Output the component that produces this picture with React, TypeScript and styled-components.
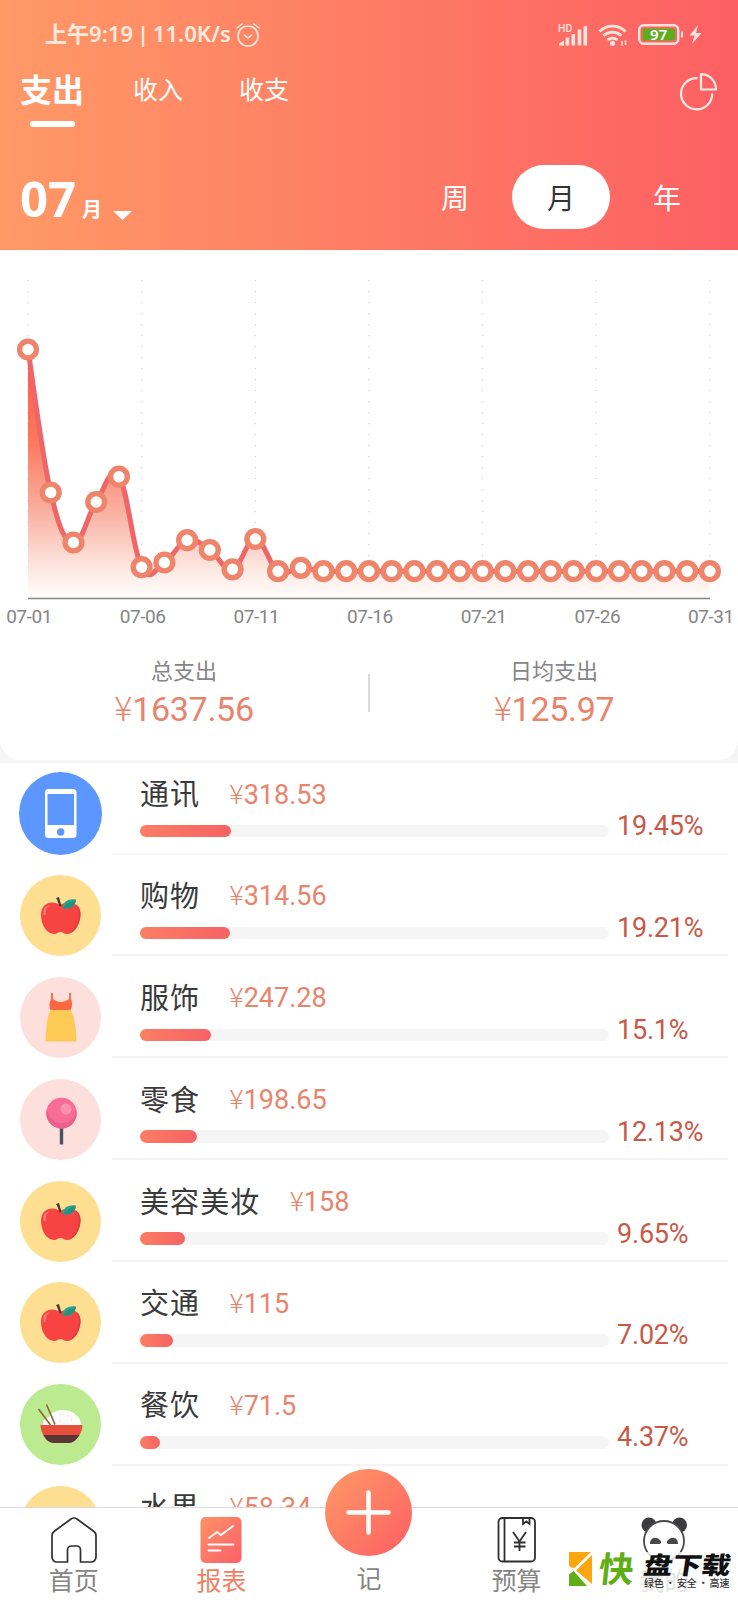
import React from 'react';
import styled, { createGlobalStyle } from 'styled-components';

const Global = createGlobalStyle`
  * { box-sizing: border-box; }
  body { margin: 0; background: #fff; }
`;

const cjk = `'Noto Sans CJK SC', sans-serif`;
const sunset = '#ff9966, #fd5f63';

const Screen = styled.div`
  position: relative;
  display: flex;
  flex-direction: column;
  width: 738px;
  height: 1600px;
  overflow: hidden;
  background: #fff;
  font-family: Roboto, ${cjk};
`;

/* ---------- header ---------- */
const Header = styled.header`
  display: flex;
  flex-direction: column;
  flex: none;
  height: 250px;
  color: #fff;
  background: linear-gradient(90deg, ${sunset});
`;

const StatusBar = styled.div`
  display: flex;
  align-items: center;
  justify-content: space-between;
  height: 66px;
  padding: 3px 35px 0 45px;
  color: #ffeadf;
`;

const StatusGroup = styled.div<{ $gap: number }>`
  display: flex;
  align-items: center;
  gap: ${(p) => p.$gap}px;
`;

const Clock = styled.span`
  width: 187px;
  margin-top: -3px;
  font: 600 22px/30px 'Noto Sans', ${cjk};
  white-space: nowrap;
  letter-spacing: 0.05px;
  word-spacing: -2px;
`;

const TabBar = styled.nav`
  display: flex;
  align-items: flex-start;
  height: 72px;
  padding: 0 20px;
`;

const Tab = styled.div<{ $active?: boolean }>`
  display: flex;
  flex-direction: column;
  align-items: center;
  gap: 10px;
  width: ${(p) => (p.$active ? 64 : 50)}px;
  margin-right: ${(p) => (p.$active ? 49 : 56)}px;
  white-space: nowrap;
  font: ${(p) => (p.$active ? '700 32px/45px' : '400 25px/45px')} ${cjk};
`;

const Underline = styled.i`
  width: 45px;
  height: 6px;
  border-radius: 3px;
  background: #fff;
`;

const PieButton = styled.div`
  margin: 6px 0 0 auto;
  height: 40px;
`;

const PeriodRow = styled.div`
  display: flex;
  align-items: center;
  justify-content: space-between;
  height: 112px;
  padding: 6px 20px 0;
`;

const MonthPicker = styled.div`
  display: flex;
  align-items: baseline;
  height: 60px;
  font: 700 49px/62px 'Noto Sans', ${cjk};
`;

const MonthUnit = styled.span`
  margin: 0 11px 0 6px;
  font: 700 20px/20px ${cjk};
`;

const PickerArrow = styled.svg`
  width: 20px;
  height: 11px;
  transform: translateY(5px);
`;

const Segments = styled.div`
  display: flex;
  align-items: center;
  gap: 8px;
  margin-right: 2px;
`;

const Segment = styled.div<{ $active?: boolean }>`
  width: 98px;
  height: 64px;
  border-radius: 32px;
  text-align: center;
  font: 400 28px/64px ${cjk};
  color: ${(p) => (p.$active ? '#333' : '#fff')};
  background: ${(p) => (p.$active ? '#fff' : 'transparent')};
`;

/* ---------- chart panel ---------- */
const PanelBacking = styled.section`
  flex: none;
  height: 513px;
  padding-bottom: 3px;
  background: #f5f5f5;
`;

const Panel = styled.div`
  height: 510px;
  border-radius: 0 0 20px 20px;
  background: #fff;
`;

const Chart = styled.svg`
  display: block;
  width: 738px;
  height: 380px;
`;

const Totals = styled.div`
  display: flex;
  align-items: flex-start;
  padding-top: 24px;
`;

const Total = styled.div`
  flex: 1;
  display: flex;
  flex-direction: column;
  align-items: center;
`;

const TotalLabel = styled.span`
  font: 400 22px/30px ${cjk};
  color: #858585;
`;

const TotalValue = styled.span`
  font: 400 34px/50px Roboto, sans-serif;
  letter-spacing: -0.3px;
  color: #e9846c;
`;

const Yen = styled.span`
  font-family: ${cjk};
  font-weight: 300;
  line-height: 1;
`;

const Divider = styled.i`
  width: 2px;
  height: 38px;
  margin-top: 20px;
  background: #dcdcdc;
`;

/* ---------- category list ---------- */
const List = styled.main`
  flex: 1;
  min-height: 0;
  overflow: hidden;
`;

const Rows = styled.div`
  margin-top: -11px;
`;

const Row = styled.div`
  display: flex;
  height: 101.9px;
`;

const Badge = styled.div<{ $bg: string; $large?: boolean }>`
  flex: none;
  width: ${(p) => (p.$large ? 83 : 81)}px;
  height: ${(p) => (p.$large ? 83 : 81)}px;
  margin: ${(p) => (p.$large ? '20px 10px 0 19px' : '21px 11px 0 20px')};
  border-radius: 50%;
  background: ${(p) => p.$bg};
  svg { display: block; width: 100%; height: 100%; }
`;

const RowBody = styled.div`
  display: flex;
  flex-direction: column;
  width: 616px;
  height: 102.5px;
  padding: 22px 0 0 28px;
  border-bottom: 2px solid #f4f4f4;
`;

const RowTitle = styled.div`
  display: flex;
  align-items: center;
  gap: 29px;
  height: 36px;
`;

const Name = styled.span`
  font: 400 29px/36px ${cjk};
  letter-spacing: 1.1px;
  color: #3a3a3a;
`;

const Amount = styled.span`
  padding-top: 5px;
  font: 400 27px/36px Roboto, sans-serif;
  color: #e9846c;
`;

const RowMeter = styled.div`
  display: flex;
  align-items: center;
  gap: 8px;
  height: 36px;
`;

const Track = styled.div`
  width: 469px;
  height: 12.5px;
  margin-top: 6px;
  border-radius: 7px;
  background: #f5f5f5;
`;

const Fill = styled.div`
  height: 12.5px;
  border-radius: 7px;
  background: linear-gradient(90deg, #fc7e63, #f66264);
`;

const Percent = styled.span`
  margin-top: -4px;
  font: 400 27px/34px Roboto, sans-serif;
  letter-spacing: -0.2px;
  color: #c95947;
`;

/* ---------- bottom navigation ---------- */
const BottomNav = styled.nav`
  position: relative;
  display: flex;
  flex: none;
  height: 93px;
  border-top: 1px solid #d8d8d8;
  background: #fff;
`;

const NavItem = styled.div<{ $active?: boolean }>`
  flex: 1;
  display: flex;
  flex-direction: column;
  align-items: center;
  padding-top: 8px;
  font: 400 25px/31px ${cjk};
  color: ${(p) => (p.$active ? '#ee7f66' : '#858585')};
  svg { display: block; flex: none; height: 48px; }
`;

const AddLabel = styled.span`
  margin-top: 46px;
`;

const AddButton = styled.div`
  position: absolute;
  left: 325px;
  top: -39px;
  width: 87px;
  height: 87px;
  border-radius: 50%;
  background: linear-gradient(135deg, ${sunset});
  svg { display: block; width: 87px; height: 87px; }
`;

/* ---------- site stamp laid over the corner ---------- */
const Stamp = styled.div`
  position: absolute;
  right: 0;
  bottom: 0;
  display: flex;
  align-items: flex-start;
  width: 169px;
  height: 50px;
  padding-top: 2px;
  white-space: nowrap;
`;

const StampLead = styled.span`
  width: 36px;
  margin: 0 0 0 6px;
  font: 700 35px/30px ${cjk};
  color: #5fae14;
  transform: skewX(-6deg);
`;

const StampText = styled.div`
  display: flex;
  flex-direction: column;
  align-items: flex-start;
  width: 98px;
  height: 48px;
  padding-left: 4px;
  margin-left: 5px;
  background: rgba(255, 255, 255, 0.78);
`;

const StampName = styled.span`
  height: 25px;
  font: 900 29px/22px ${cjk};
  color: #111;
  transform: skewX(-9deg) scaleY(0.83);
`;

const StampNote = styled.span`
  font: 500 10px/12px ${cjk};
  letter-spacing: -0.1px;
  word-spacing: -0.6px;
  color: #333;
`;

const STEP = 22.73;
const values = [99.5, 242.5, 292.5, 252, 226.7, 317.2, 312.5, 290.2, 300, 319.3, 289, 321.2, 317.8]
  .concat(Array(18).fill(321.2));
const points = values.map((y, i) => [28 + i * STEP, y]);

const at = (i: number) => points[Math.max(0, Math.min(points.length - 1, i))];
const curve = points
  .slice(1)
  .map((p, i) => {
    const k = 0.2;
    const a = at(i);
    const c1 = [a[0] + (p[0] - at(i - 1)[0]) * k, a[1] + (p[1] - at(i - 1)[1]) * k];
    const c2 = [p[0] - (at(i + 2)[0] - a[0]) * k, p[1] - (at(i + 2)[1] - a[1]) * k];
    return `C${c1} ${c2} ${p}`;
  })
  .join('');
const line = `M${points[0]}${curve}`;
const ticks = ['07-01', '07-06', '07-11', '07-16', '07-21', '07-26', '07-31'];

const TrendChart = () => (
  <Chart viewBox="0 0 738 380">
    <defs>
      <linearGradient id="area" gradientUnits="userSpaceOnUse" x1="0" y1="100" x2="0" y2="348">
        <stop offset="0" stopColor="#fb5a4a" />
        <stop offset="0.35" stopColor="#fc765b" />
        <stop offset="0.65" stopColor="#f9b0a0" />
        <stop offset="0.88" stopColor="#fde7e1" />
        <stop offset="1" stopColor="#fffdfc" />
      </linearGradient>
    </defs>
    {ticks.map((t, i) => (
      <line key={t} x1={28 + i * 113.65} x2={28 + i * 113.65} y1="30" y2="320" stroke="#d2d2d2" strokeWidth="1.2" strokeDasharray="1.2 9.8" />
    ))}
    <path d={`${line}V348H28Z`} fill="url(#area)" />
    <path d={line} fill="none" stroke="#ef6568" strokeWidth="5" strokeLinejoin="round" />
    <path d="M28 348.5H710" stroke="#858585" strokeWidth="1.3" />
    {points.map(([x, y], i) => (
      <circle key={i} cx={x} cy={y} r="8.4" fill="#fff" stroke="#ee856b" strokeWidth="5.4" />
    ))}
    {ticks.map((t, i) => (
      <text key={t} x={29 + i * 113.65} y="373" textAnchor="middle" fontFamily="Roboto, sans-serif" fontSize="19" letterSpacing="-0.45" fill="#858585">{t}</text>
    ))}
  </Chart>
);

const Phone = () => (
  <svg viewBox="0 0 83 83">
    <rect x="26" y="17" width="31.5" height="49" rx="3.5" fill="#fff" />
    <rect x="28.5" y="22" width="26.5" height="31" fill="#5b97fe" />
    <circle cx="41.7" cy="60" r="3.7" fill="#5b97fe" />
  </svg>
);

const Apple = () => (
  <svg viewBox="0 0 81 81">
    <path d="M40 30C33 25 21 27 21 40c0 10 6 19 13 19 3 0 4-2 6.500-2s3.500 2 6.500 2c7 0 13.500-10 13.500-20C60.500 28 48 25 40 30Z" fill="#f84343" />
    <path d="M55 29c8 9 2 24-6 29.500 6-1 11.500-10 11.500-19.500 0-5-2-8.500-5.500-10Z" fill="#dc3d40" />
    <path d="M23.500 40c-1-6 2-9.500 6-9.500-3 2-4 5-4 9.500Z" fill="#fb7b78" />
    <path d="m36 23 3-1 2.500 9-2 .500C38 28 38 25.500 36 23Z" fill="#473d36" />
    <path d="M42.500 33c1-7 6-9.500 13.500-8.500-1 6-5 11-13.500 8.500Z" fill="#2ea390" />
    <path d="M43 33c2-4 6-6 13-8-1 6-5 10-13 8Z" fill="#27907f" />
  </svg>
);

const Dress = () => (
  <svg viewBox="0 0 81 81">
    <path d="M32 16v8M50 16v8" stroke="#f2654a" strokeWidth="1.8" />
    <path d="M31 22c4 0 5 3 10 3s6-3 10-3c1.500 4 1.500 8-.500 11H30.500c-1.500-3-1.500-7 .500-11Z" fill="#fd6843" />
    <path d="M30.500 33h20c5 7 5.500 22 6 31.500h-31c.500-10 1-24 5-31.500Z" fill="#fdcb55" />
  </svg>
);

const Lollipop = () => (
  <svg viewBox="0 0 81 81">
    <path d="M41.500 47v18.500" stroke="#485264" strokeWidth="3.400" />
    <circle cx="41.500" cy="34" r="15.200" fill="#f96c96" />
    <path d="M27 30a15.200 15.200 0 1 0 29 0c0 8-6 14-14 14s-14-6-15-14Z" fill="#e9608c" />
    <circle cx="46" cy="30" r="5.500" fill="#fb93b1" />
  </svg>
);

const RiceBowl = () => (
  <svg viewBox="0 0 81 81">
    <path d="M23 41c0-5 3-7 6-8 3-5 8-7 13-7 11 0 18 6 19.500 15Z" fill="#fffdfb" />
    <path d="M33 33h1m6-3h1m6 2h1m3 4h1m-12 1h1" stroke="#e9dede" strokeWidth="1.300" />
    <path d="M20.500 41h42c0 8-7 18-14 18H34.500c-8 0-14-10-14-18Z" fill="#e84e3c" />
    <path d="M23.500 51h36c-3 5-7 8-11 8H34.500c-5 0-9-3-11-8Z" fill="#5b3635" />
    <path d="m18.500 25 12 16M26.500 20.500l8.500 20" stroke="#8e6336" strokeWidth="1.600" />
  </svg>
);

const categories = [
  { name: '通讯', amount: '318.53', pct: 19.45, bg: '#5b97fe', Icon: Phone, large: true },
  { name: '购物', amount: '314.56', pct: 19.21, bg: '#fedf92', Icon: Apple },
  { name: '服饰', amount: '247.28', pct: 15.1, bg: '#fde0dc', Icon: Dress },
  { name: '零食', amount: '198.65', pct: 12.13, bg: '#fde0dc', Icon: Lollipop },
  { name: '美容美妆', amount: '158', pct: 9.65, bg: '#fedf92', Icon: Apple },
  { name: '交通', amount: '115', pct: 7.02, bg: '#fedf92', Icon: Apple },
  { name: '餐饮', amount: '71.5', pct: 4.37, bg: '#bcea90', Icon: RiceBowl },
  { name: '水果', amount: '58.34', pct: 3.56, bg: '#fedf92', Icon: Apple },
];

const AlarmIcon = () => (
  <svg width="24" height="26" viewBox="0 0 24 26" fill="none" stroke="#ffeadf" strokeWidth="1.600" strokeLinecap="round">
    <circle cx="12" cy="14" r="10" />
    <path d="m8.500 13 3.500 3 3.500-3M1 6l5-4M23 6l-5-4" />
  </svg>
);

const SignalIcon = () => (
  <svg width="30" height="24" viewBox="0 0 30 24" fill="#ffe3dc">
    <text x="0" y="8.500" fontFamily="Roboto, sans-serif" fontSize="10.500" fontWeight="500">HD</text>
    <path d="M1 22.500v-2l5-3v5zM7.600 14.500h3.600v8H7.600zM13.500 11h3.600v11.500h-3.600zM19.700 6.500h3.600v16h-3.600zM25.500 3.500l3.600-1v20h-3.600z" />
  </svg>
);

const WifiIcon = () => (
  <svg width="30" height="24" viewBox="0 0 30 24" fill="none" stroke="#ffe3dc" strokeWidth="2.900">
    <path d="M1.500 8.500a18.500 18.500 0 0 1 26 0M5.500 12.800a13 13 0 0 1 18 0M9.500 17a8 8 0 0 1 10 0" />
    <circle cx="14.500" cy="20.300" r="1.200" />
    <path d="M24 18v5M27.500 17v5" strokeWidth="1.500" />
  </svg>
);

const BatteryIcon = () => (
  <svg width="65" height="22" viewBox="0 0 65 22">
    <rect x="1.200" y="1.200" width="39" height="18.600" rx="4.500" fill="none" stroke="#ffe3dc" strokeWidth="2.400" />
    <rect x="4.500" y="4.500" width="32.500" height="12" rx="1.500" fill="#5eac1f" />
    <text x="20.700" y="16" textAnchor="middle" fontFamily="Noto Sans, sans-serif" fontSize="15" fontWeight="600" fill="#fff">97</text>
    <path d="M43 7.500h2v6h-2z" fill="#ffe3dc" />
    <path d="M60 1 51.500 11.500h5L54 20l9.500-11h-5.500Z" fill="#ffe3dc" />
  </svg>
);

const PieIcon = () => (
  <svg width="39" height="39" viewBox="0 0 39 39" fill="none" stroke="#ffece6" strokeWidth="2.200">
    <path d="M18.500 6.200A15.600 15.600 0 1 0 33.200 21.500" />
    <path d="M22 2.200V17.500h15A15 15 0 0 0 22 2.200Z" strokeLinejoin="round" />
  </svg>
);

const HomeIcon = () => (
  <svg width="48" viewBox="0 0 48 48" fill="none" stroke="#2f2f2f" strokeWidth="1.700" strokeLinejoin="round">
    <path d="M17.500 46H7a5 5 0 0 1-5-5V19.500a5 5 0 0 1 2-4L21 3q3-2 6 0l17 12.500a5 5 0 0 1 2 4V41a5 5 0 0 1-5 5H30.500V34a4 4 0 0 0-4-4h-5a4 4 0 0 0-4 4Z" />
  </svg>
);

const ReportIcon = () => (
  <svg width="42" viewBox="0 0 42 48">
    <defs>
      <linearGradient id="report" x1="0" y1="0" x2="1" y2="1">
        <stop stopColor="#ff9268" /><stop offset="1" stopColor="#fb5f67" />
      </linearGradient>
    </defs>
    <rect x=".500" y="1" width="41" height="46" rx="5" fill="url(#report)" />
    <path d="m9 22 8-6 4 3 12-9M8.500 28.500h25M8.500 34.500h12" fill="none" stroke="#fff" strokeWidth="1.800" strokeLinecap="round" />
  </svg>
);

const BudgetIcon = () => (
  <svg width="40" viewBox="0 0 40 48" fill="none" stroke="#2f2f2f" strokeWidth="1.800">
    <rect x="1.500" y="2" width="36.500" height="43.500" rx="4" />
    <path d="M7.500 2V45.500M26 2v6l3.300-2.500L32.500 8V2M16 16l6.500 9.500L29 16M22.500 25.500V35M17 26.500h11.500M17 30.500h11.500" />
  </svg>
);

const PandaIcon = () => (
  <svg width="48" viewBox="0 0 48 48">
    <circle cx="9" cy="9" r="7.500" fill="#3c3c3e" />
    <circle cx="39.500" cy="9" r="7.500" fill="#3c3c3e" />
    <ellipse cx="24" cy="25" rx="20" ry="20" fill="#fff" stroke="#4a4a4c" strokeWidth="1.800" />
    <path d="M10 28c0-7 6-8 10-4 2 2 1 4-1 4Zm28 0c0-7-6-8-10-4-2 2-1 4 1 4Z" fill="#48484a" />
  </svg>
);

const StampLogo = () => (
  <svg width="24" height="35" viewBox="0 0 24 35">
    <path d="M0 0h22L5 16.500 0 14Z" fill="#fba50f" />
    <path d="M23 3v29L7 18.500Z" fill="#fba50f" />
    <path d="M0 22.500 4.500 19 18 34H0Z" fill="#5fae14" />
  </svg>
);

export default function App() {
  return (
    <Screen>
      <Global />
      <Header>
        <StatusBar>
          <StatusGroup $gap={4}>
            <Clock>上午9:19 | 11.0K/s</Clock>
            <AlarmIcon />
          </StatusGroup>
          <StatusGroup $gap={10}>
            <SignalIcon />
            <WifiIcon />
            <BatteryIcon />
          </StatusGroup>
        </StatusBar>
        <TabBar>
          <Tab $active>支出<Underline /></Tab>
          <Tab>收入</Tab>
          <Tab>收支</Tab>
          <PieButton><PieIcon /></PieButton>
        </TabBar>
        <PeriodRow>
          <MonthPicker>
            07<MonthUnit>月</MonthUnit>
            <PickerArrow viewBox="0 0 20 11"><path d="M0 0h19L9.500 9Z" fill="#fff" /></PickerArrow>
          </MonthPicker>
          <Segments>
            <Segment>周</Segment>
            <Segment $active>月</Segment>
            <Segment>年</Segment>
          </Segments>
        </PeriodRow>
      </Header>

      <PanelBacking>
        <Panel>
          <TrendChart />
          <Totals>
            <Total><TotalLabel>总支出</TotalLabel><TotalValue><Yen>¥</Yen>1637.56</TotalValue></Total>
            <Divider />
            <Total><TotalLabel>日均支出</TotalLabel><TotalValue><Yen>¥</Yen>125.97</TotalValue></Total>
          </Totals>
        </Panel>
      </PanelBacking>

      <List>
        <Rows>
          {categories.map(({ name, amount, pct, bg, Icon, large }) => (
            <Row key={name}>
              <Badge $bg={bg} $large={large}><Icon /></Badge>
              <RowBody>
                <RowTitle><Name>{name}</Name><Amount><Yen>¥</Yen>{amount}</Amount></RowTitle>
                <RowMeter>
                  <Track><Fill style={{ width: `${pct}%` }} /></Track>
                  <Percent>{pct}%</Percent>
                </RowMeter>
              </RowBody>
            </Row>
          ))}
        </Rows>
      </List>

      <BottomNav>
        <NavItem><HomeIcon />首页</NavItem>
        <NavItem $active><ReportIcon />报表</NavItem>
        <NavItem><AddLabel>记</AddLabel></NavItem>
        <NavItem><BudgetIcon />预算</NavItem>
        <NavItem><PandaIcon />我的</NavItem>
        <AddButton>
          <svg viewBox="0 0 87 87"><path d="M43.500 23.500v40M23.500 43.500h40" stroke="#fff" strokeWidth="4.500" strokeLinecap="round" /></svg>
        </AddButton>
      </BottomNav>

      <Stamp>
        <StampLogo />
        <StampLead>快</StampLead>
        <StampText>
          <StampName>盘下载</StampName>
          <StampNote>绿色 · 安全 · 高速</StampNote>
        </StampText>
      </Stamp>
    </Screen>
  );
}
